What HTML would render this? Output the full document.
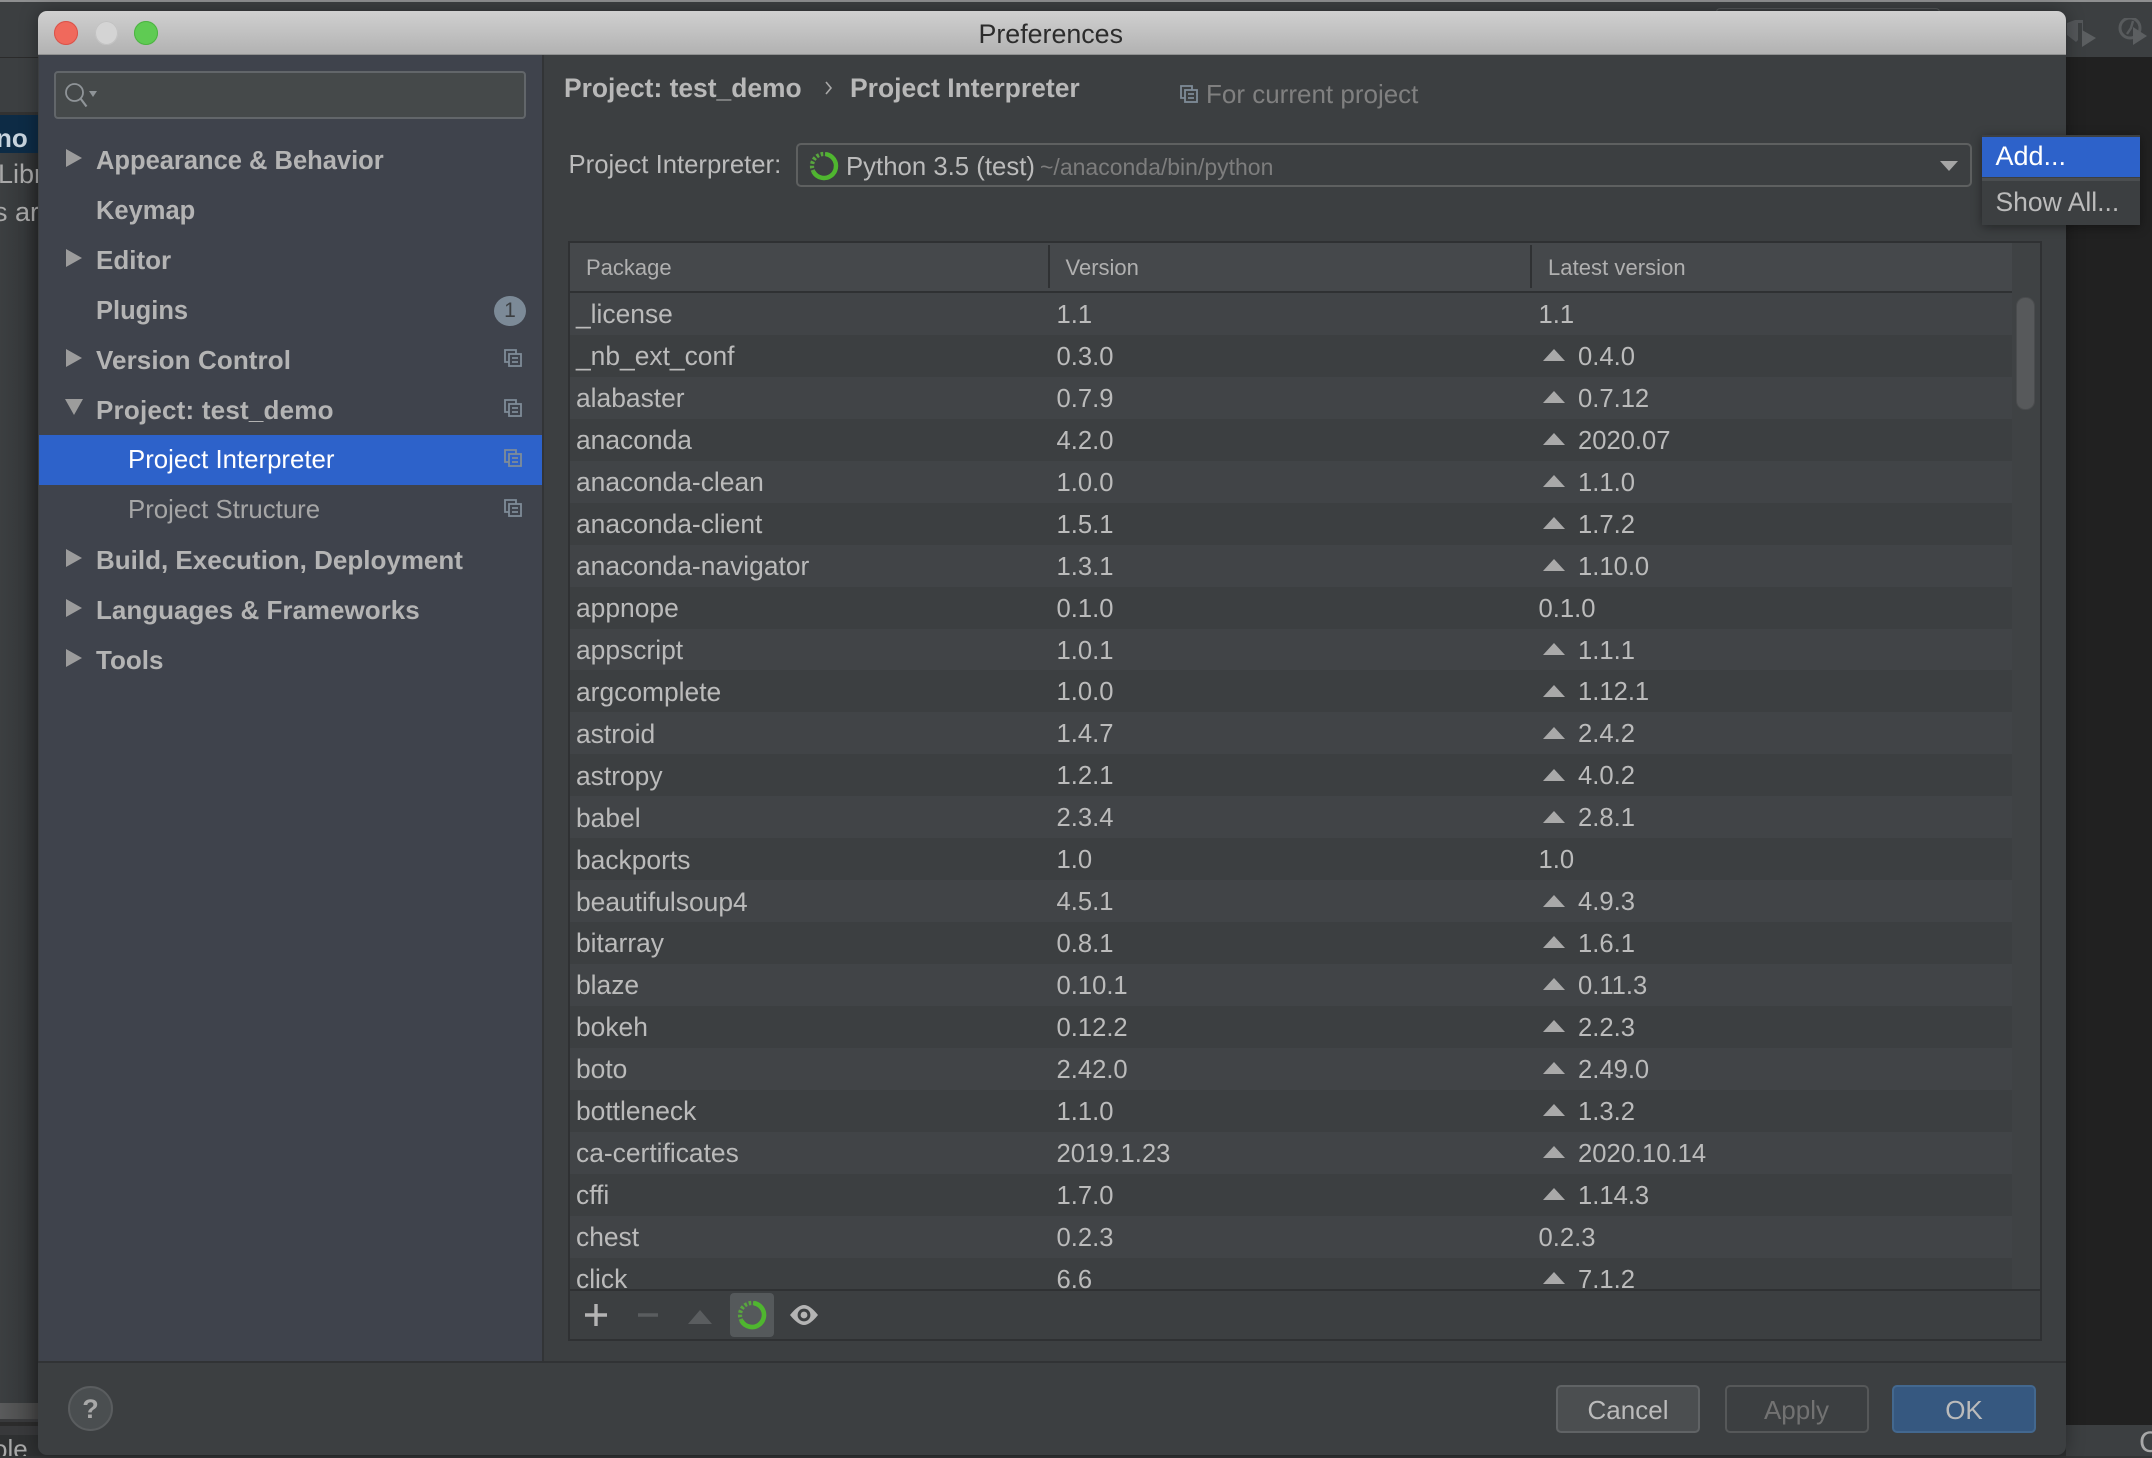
<!DOCTYPE html>
<html><head><meta charset="utf-8"><title>Preferences</title>
<style>
html,body{margin:0;padding:0;background:#2b2c2d;}
#p{position:relative;width:2152px;height:1458px;overflow:hidden;background:#2e3031;font-family:"Liberation Sans",sans-serif;color:#bbb;}
#p div,#p span.a{position:absolute;}
.t{position:absolute;white-space:nowrap;line-height:1;}
.nav{font-size:26px;font-weight:bold;color:#b4b4b4;left:96px;}
.arr{width:0;height:0;border-left:16px solid #9c9c9c;border-top:9px solid transparent;border-bottom:9px solid transparent;left:66px;}
#rows{left:570px;top:293px;width:1441.5px;height:996px;overflow:hidden;}
.r{position:relative !important;height:41.95px;line-height:41.95px;font-size:26.4px;color:#bbb;white-space:nowrap;background:#3c3f41;}
.r:nth-child(odd){background:#414447;}
.r b,.r i,.r u{position:absolute;font-weight:normal;font-style:normal;text-decoration:none;top:1.4px;}
.r i,.r u{font-size:25.6px;top:2px;}
.r b{left:6px;}.r i{left:486.5px;}.r u{left:968.5px;}
.r u.n{left:1008px;}
.r u.n:before{content:"";position:absolute;left:-35.5px;top:12.4px;width:0;height:0;border-left:11.5px solid transparent;border-right:11.5px solid transparent;border-bottom:12px solid #a9a9a9;}
.hd{font-size:22px;color:#b0b0b0;top:257.2px;}
.btn{box-sizing:border-box;top:1385px;height:48px;width:144px;border-radius:5px;text-align:center;line-height:46px;font-size:26px;border:2px solid #5e6060;}
</style></head><body><div id="p">

<!-- background IDE -->
<div style="left:0;top:0;width:2152px;height:2px;background:#8e8f90"></div>
<div style="left:0;top:2px;width:2152px;height:55px;background:#3c3f41"></div>
<div style="left:0;top:57px;width:40px;height:1px;background:#2b2b2b"></div>
<div style="left:0;top:58px;width:40px;height:54px;background:#3c3f41"></div>
<div style="left:0;top:112px;width:40px;height:3px;background:#323232"></div>
<div style="left:0;top:115px;width:40px;height:38px;background:#0d2b45"></div>
<div style="left:0;top:153px;width:40px;height:1267px;background:linear-gradient(90deg,#3c3f41,#35383a 60%,#2b2c2d)"></div>
<div style="left:0;top:1405px;width:40px;height:30px;background:#38393b"></div>
<div style="left:0;top:1403px;width:40px;height:16px;background:linear-gradient(90deg,#5a5b5c,#444)"></div>
<div style="left:0;top:1422px;width:40px;height:4px;background:#2b2b2b"></div>
<div class="t" style="left:-4px;top:125px;font-size:26px;font-weight:bold;color:#c8d4de">no</div>
<div class="t" style="left:-2px;top:161px;font-size:27px;color:#a8a8a8">Libr</div>
<div class="t" style="left:-6px;top:199px;font-size:27px;color:#a8a8a8">s ar</div>
<div class="t" style="left:-7px;top:1436px;font-size:26px;color:#a8a8a8">ole</div>
<div style="left:2066px;top:57px;width:86px;height:1368px;background:#212121"></div>
<div style="left:2066px;top:1425px;width:86px;height:33px;background:#3c3f41"></div>
<div class="t" style="left:2139px;top:1428px;font-size:30px;color:#a8a8a8">C</div>
<div style="left:0;top:1456px;width:2152px;height:2px;background:#333536"></div>
<div style="left:1716px;top:8px;width:222px;height:3px;border:1px solid #56595b;border-bottom:0;border-radius:4px 4px 0 0"></div>
<svg style="position:absolute;left:2066px;top:18px" width="86" height="32" viewBox="0 0 86 32"><path d="M1 5l8-3h8v15l-7 7-9-7z" fill="#54575a"/><path d="M12 5h4v21l-4-2z" fill="#3c3f41"/><path d="M16 12l14 8-14 9z" fill="#5c5f61"/><circle cx="64" cy="10" r="10" fill="none" stroke="#585b5d" stroke-width="3"/><path d="M67 3l-2 7-4 6" fill="none" stroke="#585b5d" stroke-width="2.4"/><path d="M67 9l14 9-14 9z" fill="#5c5f61"/></svg>

<!-- window -->
<div style="left:38px;top:11px;width:2028px;height:1444px;border-radius:9px;background:#3c3f41;box-shadow:0 0 18px rgba(0,0,0,.35);overflow:hidden;outline:0">
  <div style="left:0;top:0;width:2028px;height:43px;background:linear-gradient(#d0d0d0,#b2b2b2)"></div>
  <div style="left:0;top:43px;width:2028px;height:1px;background:#8f9090"></div>
</div>
<div style="left:54px;top:21px;width:24px;height:24px;border-radius:50%;background:#f0695c;box-shadow:inset 0 0 0 1px #d9534a"></div>
<div style="left:95px;top:21px;width:23px;height:24px;border-radius:50%;background:#d4d4d4;box-shadow:inset 0 0 0 1px #c2c2c2"></div>
<div style="left:134px;top:21px;width:24px;height:24px;border-radius:50%;background:#5fcb53;box-shadow:inset 0 0 0 1px #4cb342"></div>
<div class="t" style="left:978.5px;top:21px;font-size:26.8px;color:#2c2c2c">Preferences</div>

<!-- sidebar -->
<div style="left:38.5px;top:55px;width:503.5px;height:1306px;background:#3f434c"></div>
<div style="left:542px;top:55px;width:2px;height:1306px;background:#323436"></div>
<div style="left:38px;top:1361px;width:2028px;height:2px;background:#313335"></div>
<div style="left:54px;top:71px;width:472px;height:48px;box-sizing:border-box;border:2px solid #62666a;border-radius:4px;background:#45494a"></div>
<svg style="position:absolute;left:64px;top:82px" width="36" height="26" viewBox="0 0 36 26"><circle cx="10.5" cy="10.5" r="8.5" fill="none" stroke="#8f9498" stroke-width="1.8"/><path d="M16.5 16.5l6 8" stroke="#8f9498" stroke-width="2.2"/><path d="M25 9h8l-4 6z" fill="#8f9498"/></svg>

<div class="arr" style="top:149px"></div><div class="t nav" style="top:148.5px;font-size:25.5px">Appearance &amp; Behavior</div>
<div class="t nav" style="top:198.5px;font-size:25.5px">Keymap</div>
<div class="arr" style="top:249px"></div><div class="t nav" style="top:247px">Editor</div>
<div class="t nav" style="top:298.5px;font-size:25.5px">Plugins</div>
<div style="left:494px;top:296px;width:32px;height:30px;border-radius:50%;background:#7c8a97"></div>
<div class="t" style="left:494px;top:300px;width:32px;text-align:center;font-size:21px;color:#3c3f41">1</div>
<div class="arr" style="top:349px"></div><div class="t nav" style="top:347px;letter-spacing:.1px">Version Control</div>
<div style="left:65px;top:399px;width:0;height:0;border-top:16px solid #9c9c9c;border-left:9px solid transparent;border-right:9px solid transparent"></div>
<div class="t nav" style="top:397px;letter-spacing:.2px">Project: test_demo</div>
<div style="left:38.5px;top:435px;width:503.5px;height:50px;background:#2d62ca"></div>
<div class="t" style="left:128px;top:448px;font-size:25.8px;color:#fff">Project Interpreter</div>
<div class="t" style="left:128px;top:498px;font-size:25.8px;color:#a6a6a6">Project Structure</div>
<div class="arr" style="top:549px"></div><div class="t nav" style="top:547px">Build, Execution, Deployment</div>
<div class="arr" style="top:599px"></div><div class="t nav" style="top:597px">Languages &amp; Frameworks</div>
<div class="arr" style="top:649px"></div><div class="t nav" style="top:647px">Tools</div>

<svg style="position:absolute;left:0;top:0;pointer-events:none" width="2152" height="1458">
<defs><g id="cpi" fill="none" stroke="#7f8c98" stroke-width="1.8"><path d="M5 13H1V1h11v4"/><rect x="5" y="5" width="12" height="12"/><path d="M8 9h6M8 13h6"/></g></defs>
<use href="#cpi" x="504" y="349"/><use href="#cpi" x="504" y="399"/><use href="#cpi" x="504" y="449"/><use href="#cpi" x="504" y="499"/><use href="#cpi" x="1180" y="85"/>
</svg>

<!-- header area -->
<div class="t" style="left:564px;top:75px;font-size:26.4px;font-weight:bold;color:#b8b8b8">Project: test_demo</div>
<svg style="position:absolute;left:824px;top:80px" width="10" height="16"><path d="M2 2l5 6-5 6" fill="none" stroke="#a8a8a8" stroke-width="1.6"/></svg>
<div class="t" style="left:850px;top:75px;font-size:26.5px;font-weight:bold;color:#b8b8b8">Project Interpreter</div>
<div class="t" style="left:1206px;top:81px;font-size:26px;color:#808080">For current project</div>
<div class="t" style="left:568.5px;top:153px;font-size:25.7px;color:#bbb">Project Interpreter:</div>
<div style="left:796px;top:143px;width:1175.5px;height:44px;box-sizing:border-box;border:2px solid #5e6060;border-radius:5px;background:#3c3f41"></div>
<svg style="position:absolute;left:808px;top:150px" width="32" height="32" viewBox="0 0 32 32"><circle cx="16" cy="16" r="12" fill="none" stroke="#58a53e" stroke-width="4.2" stroke-dasharray="2.6 1.8"/><circle cx="16" cy="16" r="12" fill="none" stroke="#4fb62f" stroke-width="4.4" stroke-dasharray="48 27.4" transform="rotate(-80 16 16)"/></svg>
<div class="t" style="left:846px;top:155px;font-size:25.75px;color:#bbb">Python 3.5 (test)</div>
<div class="t" style="left:1040px;top:156px;font-size:23px;color:#7d7d7d">~/anaconda/bin/python</div>
<div style="left:1940px;top:161px;width:0;height:0;border-top:10px solid #a5a5a5;border-left:9px solid transparent;border-right:9px solid transparent"></div>

<!-- table -->
<div style="left:568px;top:241px;width:1474px;height:100px;box-sizing:border-box;border:2px solid #2f3133;border-bottom:0"></div>
<div style="left:568px;top:241px;width:2px;height:1100px;background:#2f3133"></div>
<div style="left:2040px;top:241px;width:2px;height:1100px;background:#2f3133"></div>
<div style="left:568px;top:1339px;width:1474px;height:2px;background:#2f3133"></div>
<div style="left:570px;top:243px;width:1441.5px;height:48px;background:#45484b"></div>
<div style="left:570px;top:291px;width:1441.5px;height:2px;background:#2f3133"></div>
<div style="left:1048px;top:245px;width:2px;height:43px;background:#2f3133"></div>
<div style="left:1530px;top:245px;width:2px;height:43px;background:#2f3133"></div>
<div class="t hd" style="left:586px">Package</div>
<div class="t hd" style="left:1065.5px">Version</div>
<div class="t hd" style="left:1548px;letter-spacing:.05px">Latest version</div>
<div style="left:2011.5px;top:243px;width:28.5px;height:1046px;background:#3f4244"></div>
<div style="left:2017px;top:298px;width:17px;height:111px;border-radius:8px;background:#57595b;box-shadow:0 0 0 1px #4a4c4e"></div>

<div id="rows">
<div class="r"><b>_license</b><i>1.1</i><u>1.1</u></div>
<div class="r"><b>_nb_ext_conf</b><i>0.3.0</i><u class="n">0.4.0</u></div>
<div class="r"><b>alabaster</b><i>0.7.9</i><u class="n">0.7.12</u></div>
<div class="r"><b>anaconda</b><i>4.2.0</i><u class="n">2020.07</u></div>
<div class="r"><b>anaconda-clean</b><i>1.0.0</i><u class="n">1.1.0</u></div>
<div class="r"><b>anaconda-client</b><i>1.5.1</i><u class="n">1.7.2</u></div>
<div class="r"><b>anaconda-navigator</b><i>1.3.1</i><u class="n">1.10.0</u></div>
<div class="r"><b>appnope</b><i>0.1.0</i><u>0.1.0</u></div>
<div class="r"><b>appscript</b><i>1.0.1</i><u class="n">1.1.1</u></div>
<div class="r"><b>argcomplete</b><i>1.0.0</i><u class="n">1.12.1</u></div>
<div class="r"><b>astroid</b><i>1.4.7</i><u class="n">2.4.2</u></div>
<div class="r"><b>astropy</b><i>1.2.1</i><u class="n">4.0.2</u></div>
<div class="r"><b>babel</b><i>2.3.4</i><u class="n">2.8.1</u></div>
<div class="r"><b>backports</b><i>1.0</i><u>1.0</u></div>
<div class="r"><b>beautifulsoup4</b><i>4.5.1</i><u class="n">4.9.3</u></div>
<div class="r"><b>bitarray</b><i>0.8.1</i><u class="n">1.6.1</u></div>
<div class="r"><b>blaze</b><i>0.10.1</i><u class="n">0.11.3</u></div>
<div class="r"><b>bokeh</b><i>0.12.2</i><u class="n">2.2.3</u></div>
<div class="r"><b>boto</b><i>2.42.0</i><u class="n">2.49.0</u></div>
<div class="r"><b>bottleneck</b><i>1.1.0</i><u class="n">1.3.2</u></div>
<div class="r"><b>ca-certificates</b><i>2019.1.23</i><u class="n">2020.10.14</u></div>
<div class="r"><b>cffi</b><i>1.7.0</i><u class="n">1.14.3</u></div>
<div class="r"><b>chest</b><i>0.2.3</i><u>0.2.3</u></div>
<div class="r"><b>click</b><i>6.6</i><u class="n">7.1.2</u></div>
</div>
<div style="left:570px;top:1289px;width:1470px;height:2px;background:#2f3133"></div>

<!-- toolbar -->
<svg style="position:absolute;left:570px;top:1291px" width="270" height="48" viewBox="570 1291 270 48">
<path d="M585 1315h22M596 1304v22" stroke="#b4b4b4" stroke-width="3.4"/>
<path d="M638 1315h20" stroke="#5a5d5f" stroke-width="3.4"/>
<path d="M688 1325l12-14 12 14z" fill="#5a5d5f" transform="translate(0 -1)"/>
<rect x="730" y="1293" width="44" height="44" rx="4" fill="#55595b"/>
<circle cx="752" cy="1315" r="12" fill="none" stroke="#58a53e" stroke-width="4.2" stroke-dasharray="2.6 1.8"/>
<circle cx="752" cy="1315" r="12" fill="none" stroke="#4fb62f" stroke-width="4.6" stroke-dasharray="48 27.4" transform="rotate(-80 752 1315)"/>
<path d="M790 1315Q798 1305 804 1305Q810 1305 818 1315Q810 1325 804 1325Q798 1325 790 1315Z" fill="#b4b4b4"/>
<circle cx="804" cy="1315" r="6.4" fill="#3c3f41"/><circle cx="804" cy="1315" r="3.4" fill="#b4b4b4"/>
</svg>

<!-- bottom -->
<div style="left:68px;top:1386px;width:45px;height:45px;box-sizing:border-box;border-radius:50%;background:#4a4e50;border:2px solid #5a5d5f"></div>
<div class="t" style="left:68px;top:1396px;width:45px;text-align:center;font-size:27px;font-weight:bold;color:#a8a8a8">?</div>
<div class="btn" style="left:1556px;background:#4b4e50;color:#bbb;border-color:#606365">Cancel</div>
<div class="btn" style="left:1724.5px;color:#727272;background:#3c3f41;border-color:#565859">Apply</div>
<div class="btn" style="left:1892px;background:#365880;color:#bbb;border-color:#43688f">OK</div>

<!-- popup -->
<div style="left:1982px;top:135px;width:158px;height:90px;background:#3c3f41;box-shadow:0 2px 10px rgba(0,0,0,.4)"></div>
<div style="left:1982px;top:137px;width:158px;height:40px;background:#2d62ca"></div>
<div style="left:1982px;top:178px;width:158px;height:3px;background:#4b4e50"></div>
<div class="t" style="left:1995.5px;top:143px;font-size:27px;color:#fff">Add...</div>
<div class="t" style="left:1995.5px;top:189px;font-size:26.5px;color:#bbb">Show All...</div>
</div></body></html>
